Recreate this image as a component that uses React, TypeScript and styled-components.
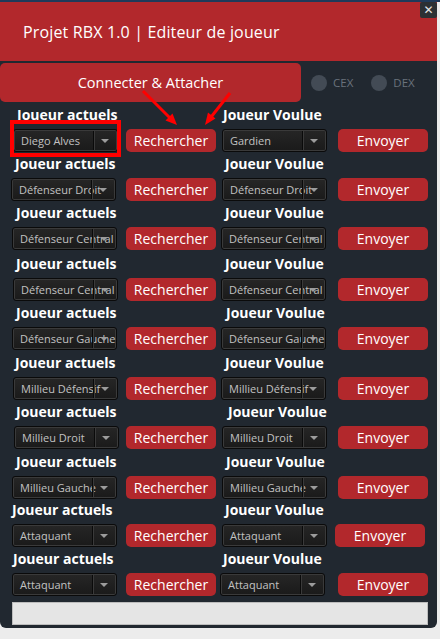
import React from "react";
import styled, { createGlobalStyle } from "styled-components";

const Global = createGlobalStyle`
  html, body { margin: 0; padding: 0; }
  body {
    width: 440px; height: 639px; overflow: hidden;
    background: linear-gradient(#1f3a5a 0, #1f3a5a 2px, #ececec 2px);
    font-family: "Open Sans", "Noto Sans", sans-serif;
  }
`;

const RED = "#b2282c";

const Window = styled.div`
  position: relative;
  margin-top: 2px;
  width: 437px;
  height: 626px;
  box-sizing: border-box;
  background: #212830;
  border-radius: 0 0 6px 6px;
  padding-bottom: 3px;
  display: flex;
  flex-direction: column;
`;

const Header = styled.div`
  position: relative;
  height: 59px;
  background: ${RED};
  display: flex;
  align-items: center;
  padding-left: 23px;
`;

const Title = styled.h1`
  margin: 0;
  color: #ffffff;
  font-family: "Open Sans", sans-serif;
  font-weight: 400;
  font-size: 16px;
  letter-spacing: 0.15px;
`;

const CloseButton = styled.div`
  position: absolute;
  top: 0;
  right: 0;
  width: 17px;
  height: 16px;
  background: #2c3034;
  border-radius: 2px;
  color: #e6e6e6;
  font: bold 12px "DejaVu Sans", sans-serif;
  display: flex;
  align-items: center;
  justify-content: center;
`;

const ConnectBar = styled.div`
  margin-top: 2px;
  height: 39px;
  display: flex;
  align-items: center;
`;

const ConnectButton = styled.div`
  width: 301px;
  height: 39px;
  background: ${RED};
  border-radius: 5px;
  color: #ffffff;
  font: 400 14.5px "Open Sans", sans-serif;
  display: flex;
  align-items: center;
  justify-content: center;
`;

const Radio = styled.div<{ $ml: number }>`
  margin-left: ${(p) => p.$ml}px;
  display: flex;
  align-items: center;
  gap: 6px;
  color: #6a727c;
  font: 400 11.5px "Open Sans", sans-serif;
`;

const RadioDot = styled.span`
  width: 16px;
  height: 16px;
  border-radius: 50%;
  background: #434b55;
`;

const Row = styled.div<{ $mt: number }>`
  margin-top: ${(p) => p.$mt}px;
  display: flex;
  flex-direction: column;
  gap: 6px;
`;

const Line = styled.div`
  display: grid;
  grid-template-columns: 116px 92px 116px 100px;
  padding-left: 10px;
  align-items: center;
`;

const Label = styled.div<{ $dx: number; $col: string }>`
  grid-column: ${(p) => p.$col};
  margin-left: ${(p) => p.$dx}px;
  height: 16px;
  color: #ffffff;
  font: 700 14px/16px "Open Sans", sans-serif;
  white-space: nowrap;
`;

const SelectBox = styled.div<{ $dx: number }>`
  position: relative;
  margin-left: ${(p) => p.$dx}px;
  width: 105px;
  height: 23px;
  box-sizing: border-box;
  border: 1px solid #0a0a0a;
  border-radius: 3px;
  background: linear-gradient(#262626, #1a1a1a);
  box-shadow: inset 0 0 0 1px #3a3a3a;
  overflow: hidden;
  display: flex;
  align-items: center;
  padding-left: 7px;
  color: #c2c2c2;
  font: 400 11px "Open Sans", sans-serif;
  white-space: nowrap;
`;

const ArrowPart = styled.span`
  position: absolute;
  top: 1px;
  bottom: 1px;
  right: 1px;
  width: 22px;
  border-left: 1px solid #0a0a0a;
  box-shadow: inset 1px 0 0 #3a3a3a;
  display: flex;
  align-items: center;
  justify-content: center;
  &::after {
    content: "";
    border-left: 4px solid transparent;
    border-right: 4px solid transparent;
    border-top: 4px solid #9c9c9c;
  }
`;

const RedButton = styled.div<{ $dx?: number }>`
  margin-left: ${(p) => p.$dx ?? 0}px;
  width: 90px;
  height: 23px;
  border-radius: 5px;
  background: ${RED};
  color: #ffffff;
  font: 400 14px "Open Sans", sans-serif;
  display: flex;
  align-items: center;
  justify-content: center;
`;

const Progress = styled.div`
  margin: 6px 0 0 12px;
  width: 416px;
  height: 23px;
  box-sizing: border-box;
  background: #e5e5e5;
  border: 1px solid #bdbdbd;
`;

const Highlight = styled.div`
  position: absolute;
  left: 10px;
  top: 118px;
  width: 111px;
  height: 37px;
  box-sizing: border-box;
  border: 4px solid #ff0000;
  pointer-events: none;
`;

const Overlay = styled.svg`
  position: absolute;
  left: 0;
  top: 0;
  pointer-events: none;
`;

type RowData = {
  l: string;
  r: string;
  lx: number;
  ldd: number;
  rlx: number;
  rdd: number;
  ex: number;
  top: number;
};

const rows: RowData[] = [
  { l: "Diego Alves", r: "Gardien", lx: 17, ldd: 13, rlx: 223, rdd: 222, ex: 338, top: 129 },
  { l: "Défenseur Droit", r: "Défenseur Droit", lx: 15, ldd: 11, rlx: 225, rdd: 222, ex: 338, top: 178 },
  { l: "Défenseur Central", r: "Défenseur Central", lx: 16, ldd: 12, rlx: 225, rdd: 221, ex: 338, top: 227 },
  { l: "Défenseur Central", r: "Défenseur Central", lx: 16, ldd: 13, rlx: 225, rdd: 221, ex: 338, top: 278 },
  { l: "Défenseur Gauche", r: "Défenseur Gauche", lx: 16, ldd: 12, rlx: 226, rdd: 221, ex: 338, top: 327 },
  { l: "Millieu Défensif", r: "Millieu Défensif", lx: 15, ldd: 13, rlx: 225, rdd: 221, ex: 338, top: 377 },
  { l: "Millieu Droit", r: "Millieu Droit", lx: 16, ldd: 14, rlx: 228, rdd: 222, ex: 338, top: 426 },
  { l: "Millieu Gauche", r: "Millieu Gauche", lx: 16, ldd: 12, rlx: 226, rdd: 222, ex: 338, top: 476 },
  { l: "Attaquant", r: "Attaquant", lx: 12, ldd: 12, rlx: 225, rdd: 222, ex: 335, top: 524 },
  { l: "Attaquant", r: "Attaquant", lx: 13, ldd: 12, rlx: 223, rdd: 220, ex: 338, top: 573 },
];

const Select = ({ value, dx }: { value: string; dx: number }) => (
  <SelectBox $dx={dx}>
    {value}
    <ArrowPart />
  </SelectBox>
);

export default function App() {
  let prevBottom = 102; // bottom of the connect bar (page y)
  return (
    <>
      <Global />
      <Window>
        <Header>
          <Title>Projet RBX 1.0 | Editeur de joueur</Title>
          <CloseButton>✕</CloseButton>
        </Header>
        <ConnectBar>
          <ConnectButton>Connecter &amp; Attacher</ConnectButton>
          <Radio $ml={10}>
            <RadioDot />
            CEX
          </Radio>
          <Radio $ml={18}>
            <RadioDot />
            DEX
          </Radio>
        </ConnectBar>
        {rows.map((r, i) => {
          const labelTop = r.top - 6 - 16;
          const mt = labelTop - prevBottom;
          prevBottom = r.top + 23;
          return (
            <Row key={i} $mt={mt}>
              <Line>
                <Label $col="1 / 3" $dx={r.lx - 10}>Joueur actuels</Label>
                <Label $col="3 / 5" $dx={r.rlx - 218}>Joueur Voulue</Label>
              </Line>
              <Line>
                <Select value={r.l} dx={r.ldd - 10} />
                <RedButton>Rechercher</RedButton>
                <Select value={r.r} dx={r.rdd - 218} />
                <RedButton $dx={r.ex - 334}>Envoyer</RedButton>
              </Line>
            </Row>
          );
        })}
        <Progress />
        <Highlight />
        <Overlay width="437" height="200" viewBox="0 0 437 200">
          <g stroke="#ff0000" strokeWidth="3" fill="#ff0000" strokeLinecap="butt">
            <line x1="143" y1="89" x2="169.5" y2="115.5" />
            <polygon points="177,123 165.5,118.5 172.5,111.5" stroke="none" />
            <line x1="230" y1="91" x2="211.5" y2="114.5" />
            <polygon points="205,123 208,110.5 215.5,116.5" stroke="none" />
          </g>
        </Overlay>
      </Window>
    </>
  );
}
